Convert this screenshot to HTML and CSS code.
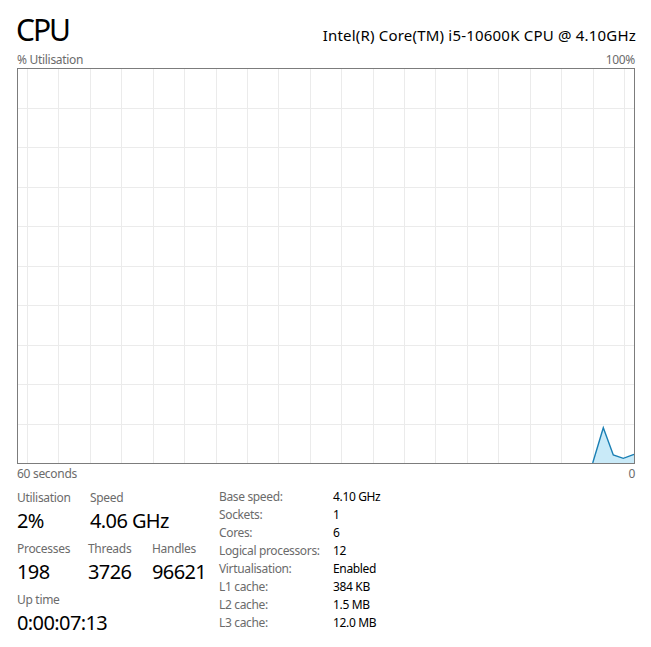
FILE: index.html
```
<!DOCTYPE html>
<html>
<head>
<meta charset="utf-8">
<link rel="stylesheet" href="styles.css">
</head>
<body>
<div class="page">
  <div class="header">
    <div class="title">CPU</div>
    <div class="model">Intel(R) Core(TM) i5-10600K CPU @ 4.10GHz</div>
  </div>
  <div class="axis axis-top"><span>% Utilisation</span><span>100%</span></div>
  <svg class="graph" width="618" height="396" viewBox="0 0 618 396">
    <g stroke="#ebebeb" stroke-width="1">
      <path d="M10.5 1V395M41.5 1V395M73.5 1V395M104.5 1V395M136.5 1V395M167.5 1V395M199.5 1V395M230.5 1V395M261.5 1V395M293.5 1V395M324.5 1V395M356.5 1V395M387.5 1V395M418.5 1V395M450.5 1V395M481.5 1V395M513.5 1V395M544.5 1V395M576.5 1V395M607.5 1V395"/>
      <path d="M1 40.5H617M1 79.5H617M1 119.5H617M1 158.5H617M1 198.5H617M1 237.5H617M1 277.5H617M1 316.5H617M1 356.5H617"/>
    </g>
    <path d="M575.7 395L586.3 359.7L596.3 387L606.3 390.3L617 386.3V395Z" fill="#c9eaf8"/>
    <path d="M575.7 395L586.3 359.7L596.3 387L606.3 390.3L617 386.3" fill="none" stroke="#1a7fb4" stroke-width="1.4"/>
    <rect x="0.5" y="0.5" width="617" height="395" fill="none" stroke="#7c7c7c" stroke-width="1"/>
  </svg>
  <div class="axis axis-bottom"><span>60 seconds</span><span>0</span></div>
  <div class="stats">
    <div class="dyn">
      <div class="row">
        <div class="stat w73"><div class="label">Utilisation</div><div class="value">2%</div></div>
        <div class="stat"><div class="label">Speed</div><div class="value">4.06 GHz</div></div>
      </div>
      <div class="row">
        <div class="stat w71"><div class="label">Processes</div><div class="value">198</div></div>
        <div class="stat w64"><div class="label">Threads</div><div class="value">3726</div></div>
        <div class="stat"><div class="label">Handles</div><div class="value">96621</div></div>
      </div>
      <div class="row">
        <div class="stat"><div class="label">Up time</div><div class="value">0:00:07:13</div></div>
      </div>
    </div>
    <div class="info">
      <div class="k">Base speed:</div><div class="v">4.10 GHz</div>
      <div class="k">Sockets:</div><div class="v">1</div>
      <div class="k">Cores:</div><div class="v">6</div>
      <div class="k">Logical processors:</div><div class="v">12</div>
      <div class="k">Virtualisation:</div><div class="v">Enabled</div>
      <div class="k">L1 cache:</div><div class="v">384 KB</div>
      <div class="k">L2 cache:</div><div class="v">1.5 MB</div>
      <div class="k">L3 cache:</div><div class="v">12.0 MB</div>
    </div>
  </div>
</div>
</body>
</html>
```
FILE: styles.css
```
html, body {
  margin: 0;
  padding: 0;
  background: #ffffff;
}
body {
  font-family: "Noto Sans", "Open Sans", sans-serif;
  color: #000;
}
.page {
  width: 618px;
  padding: 12px 0 0 17px;
}
.header {
  display: flex;
  justify-content: space-between;
  align-items: baseline;
  height: 36px;
}
.title {
  font-size: 30px;
  line-height: 36px;
  margin-left: -1px;
  letter-spacing: -2px;
}
.model {
  font-size: 15px;
  line-height: 20px;
  margin-right: -1px;
  letter-spacing: 0.2px;
}
.axis {
  display: flex;
  justify-content: space-between;
  font-size: 12px;
  line-height: 14px;
  height: 14px;
  color: #6b6b6b;
  letter-spacing: -0.3px;
}
.axis-top {
  margin-top: 5px;
}
.axis-bottom {
  margin-top: 3px;
}
.graph {
  display: block;
  margin-top: 1px;
}
.stats {
  display: flex;
  margin-top: 9px;
}
.dyn {
  width: 202px;
  display: flex;
  flex-direction: column;
  gap: 6px;
}
.row {
  display: flex;
}
.w73 { width: 73px; }
.w71 { width: 71px; }
.w64 { width: 64px; }
.label {
  font-size: 12px;
  line-height: 16px;
  color: #6b6b6b;
  letter-spacing: -0.3px;
}
.value {
  font-size: 20px;
  line-height: 29px;
  white-space: nowrap;
  letter-spacing: -0.6px;
}
.info {
  display: grid;
  grid-template-columns: 114px auto;
  grid-auto-rows: 18px;
  align-content: start;
  margin-top: -2px;
  font-size: 12px;
  line-height: 18px;
  letter-spacing: -0.35px;
}
.k {
  color: #6b6b6b;
}
.v {
  color: #000;
}
```
